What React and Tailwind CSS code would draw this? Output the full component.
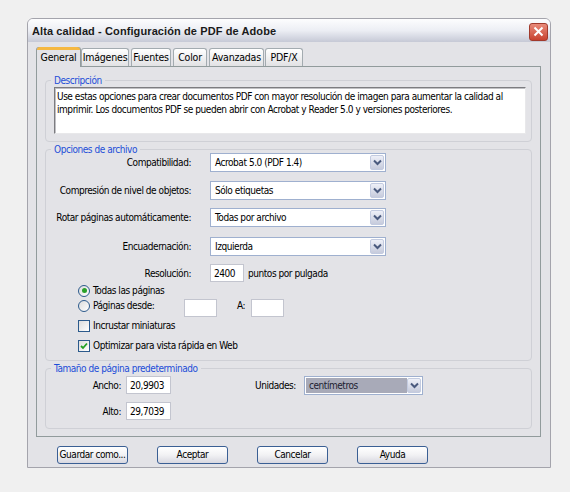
import React from "react";

const FONT = "font-['DejaVu_Sans_Condensed','Liberation_Sans',sans-serif]";

const Chevron = () => (
  <svg width="9" height="7" viewBox="0 0 9 7" className="block">
    <path d="M1 1.5 L4.5 5 L8 1.5" fill="none" stroke="#4a5a7e" strokeWidth="2" />
  </svg>
);

function Select({ value, className = "", inverted = false }) {
  return (
    <div
      className={`flex h-[19px] items-stretch border border-[#9fb0cf] bg-white p-px ${className}`}
    >
      <div
        className={`flex flex-1 items-center pl-[3px] ${
          inverted ? "bg-[#a8aab8] text-[#202030]" : "text-black"
        }`}
      >
        {value}
      </div>
      <div className="flex w-[14px] items-center justify-center rounded-[2px] border border-[#c3cbe0] bg-gradient-to-b from-[#eef0f8] to-[#c6cbdc]">
        <Chevron />
      </div>
    </div>
  );
}

function Field({ value = "", className = "" }) {
  return (
    <div
      className={`flex h-[18px] items-center border border-[#c3c5cf] bg-white pl-[3px] ${className}`}
    >
      {value}
    </div>
  );
}

function Group({ label, className = "", children }) {
  return (
    <fieldset className={`rounded-[4px] border border-[#cfd0d6] ${className}`}>
      <legend className="ml-[5px] px-[3px] leading-[13px] text-[#1d4ed8]">
        {label}
      </legend>
      {children}
    </fieldset>
  );
}

function Radio({ checked }) {
  return (
    <span className="flex h-[12px] w-[12px] shrink-0 items-center justify-center rounded-full border border-[#2c5a8c] bg-gradient-to-br from-[#dcdcdc] to-white">
      {checked && <span className="h-[5px] w-[5px] rounded-full bg-[#2aa12a]" />}
    </span>
  );
}

function Check({ checked }) {
  return (
    <span className="flex h-[12px] w-[12px] shrink-0 items-center justify-center border border-[#2c5a8c] bg-gradient-to-br from-[#dcdcdc] to-white">
      {checked && (
        <svg width="8" height="8" viewBox="0 0 8 8">
          <path d="M1 4 L3 6 L7 1.5" fill="none" stroke="#22a022" strokeWidth="1.8" />
        </svg>
      )}
    </span>
  );
}

function Button({ children }) {
  return (
    <button className="h-[18px] w-[71px] whitespace-nowrap rounded-[3px] border border-[#3a5f94] bg-gradient-to-b from-white via-[#f2f2f4] to-[#d8d8e0] leading-none text-black">
      {children}
    </button>
  );
}

const tabs = [
  ["Imágenes", "w-[48px]", "ml-0"],
  ["Fuentes", "w-[40px]", "ml-[2px]"],
  ["Color", "w-[34px]", "ml-[2px]"],
  ["Avanzadas", "w-[55px]", "ml-[2px]"],
  ["PDF/X", "w-[38px]", "ml-[1px]"],
];

export default function App() {
  return (
    <div
      className={`min-h-[492px] w-[570px] bg-[#f0f0f0] pt-[18px] pl-[27px] text-[10px] leading-[13px] tracking-[-0.45px] ${FONT}`}
    >
      <div className="flex h-[450px] w-[524px] flex-col rounded-t-[6px] border border-[#a4a4ac] bg-[#e3e3e7]">
        {/* Title bar */}
        <div className="flex h-[23px] items-center justify-between rounded-t-[5px] bg-gradient-to-b from-[#fdfdfe] via-[#eceef4] to-[#c6c9d6] pl-[4px] pr-[2px] pt-[2px]">
          <span className="font-['Liberation_Sans',Arial,sans-serif] text-[11px] font-bold tracking-[0.1px] text-[#1a1a1a]">
            Alta calidad - Configuración de PDF de Adobe
          </span>
          <span className="flex h-[18px] w-[19px] items-center justify-center rounded-[3px] border border-[#a13a2c] bg-gradient-to-b from-[#e88a7a] to-[#c8412e]">
            <svg width="11" height="11" viewBox="0 0 11 11">
              <path d="M1.5 1.5 L9.5 9.5 M9.5 1.5 L1.5 9.5" stroke="white" strokeWidth="2" />
            </svg>
          </span>
        </div>

        <div className="flex flex-1 flex-col pl-[8px] pr-[9px] pt-[5px]">
          {/* Tabs */}
          <div className="flex items-end text-[10.5px] tracking-[-0.2px]">
            <div className="relative z-10 -mb-px flex h-[20px] w-[45px] items-center justify-center rounded-t-[3px] border border-b-0 border-[#919b9c] bg-[#e3e3e7]">
              <span className="absolute inset-x-0 -top-px h-[3px] rounded-t-[3px] bg-[#f5b842]" />
              General
            </div>
            {tabs.map(([t, w, m]) => (
              <div
                key={t}
                className={`flex h-[18px] items-center justify-center rounded-t-[3px] border border-b-0 border-[#a3abb0] bg-gradient-to-b from-white to-[#e2e2e4] ${w} ${m}`}
              >
                {t}
              </div>
            ))}
          </div>

          {/* Panel */}
          <div className="flex h-[371px] flex-col border border-[#919b9c] bg-[#e3e3e7] px-[8px] pt-[7px]">
            <Group label="Descripción">
              <div className="pb-[7px] pl-[8px] pr-[5px]">
                <div className="h-[47px] whitespace-nowrap border border-t-[#7c7c80] border-l-[#7c7c80] border-b-[#e8e8ea] border-r-[#e8e8ea] bg-white px-[2px] pt-[2px] shadow-[inset_1px_1px_0_#c0c0c4]">
                  Use estas opciones para crear documentos PDF con mayor resolución de imagen para aumentar la calidad al
                  <br />
                  imprimir. Los documentos PDF se pueden abrir con Acrobat y Reader 5.0 y versiones posteriores.
                </div>
              </div>
            </Group>

            <Group label="Opciones de archivo" className="mt-[1px]">
              <div className="-mt-[3px] flex flex-col pb-[8px]">
                {[
                  ["Compatibilidad:", "Acrobat 5.0 (PDF 1.4)", "mt-0"],
                  ["Compresión de nivel de objetos:", "Sólo etiquetas", "mt-[9px]"],
                  ["Rotar páginas automáticamente:", "Todas por archivo", "mt-[8px]"],
                  ["Encuadernación:", "Izquierda", "mt-[10px]"],
                ].map(([l, v, m]) => (
                  <div key={l} className={`flex items-center ${m}`}>
                    <span className="w-[145px] whitespace-nowrap text-right">{l}</span>
                    <Select value={v} className="ml-[19px] w-[176px]" />
                  </div>
                ))}
                <div className="mt-[8px] flex items-center">
                  <span className="w-[145px] text-right">Resolución:</span>
                  <Field value="2400" className="ml-[19px] w-[34px]" />
                  <span className="ml-[4px]">puntos por pulgada</span>
                </div>
                <div className="ml-[32px] mt-[2px] flex h-[13px] items-center gap-[3px]">
                  <Radio checked />
                  <span>Todas las páginas</span>
                </div>
                <div className="ml-[32px] mt-[2px] flex h-[18px] items-start">
                  <span className="flex h-[13px] items-center">
                    <Radio />
                  </span>
                  <span className="ml-[3px] w-[91px]">Páginas desde:</span>
                  <Field className="w-[33px]" />
                  <span className="ml-[20px] w-[14px]">A:</span>
                  <Field className="w-[33px]" />
                </div>
                <div className="ml-[32px] mt-[2px] flex h-[13px] items-center gap-[3px]">
                  <Check />
                  <span>Incrustar miniaturas</span>
                </div>
                <div className="ml-[32px] mt-[7px] flex h-[13px] items-center gap-[3px]">
                  <Check checked />
                  <span>Optimizar para vista rápida en Web</span>
                </div>
              </div>
            </Group>

            <Group label="Tamaño de página predeterminado" className="mt-[1px]">
              <div className="mt-[1px] flex pb-[8px]">
                <div className="flex flex-col gap-[8px]">
                  <div className="flex items-center">
                    <span className="w-[75px] text-right">Ancho:</span>
                    <Field value="20,9903" className="ml-[5px] w-[45px]" />
                  </div>
                  <div className="flex items-center">
                    <span className="w-[75px] text-right">Alto:</span>
                    <Field value="29,7039" className="ml-[5px] w-[45px]" />
                  </div>
                </div>
                <div className="ml-[84px] flex h-[18px] items-center">
                  <span className="w-[49px]">Unidades:</span>
                  <Select value="centímetros" inverted className="w-[119px]" />
                </div>
              </div>
            </Group>
          </div>

          {/* Buttons */}
          <div className="mt-[9px] flex gap-[29px] pl-[21px]">
            <Button>Guardar como...</Button>
            <Button>Aceptar</Button>
            <Button>Cancelar</Button>
            <Button>Ayuda</Button>
          </div>
        </div>
      </div>
    </div>
  );
}
